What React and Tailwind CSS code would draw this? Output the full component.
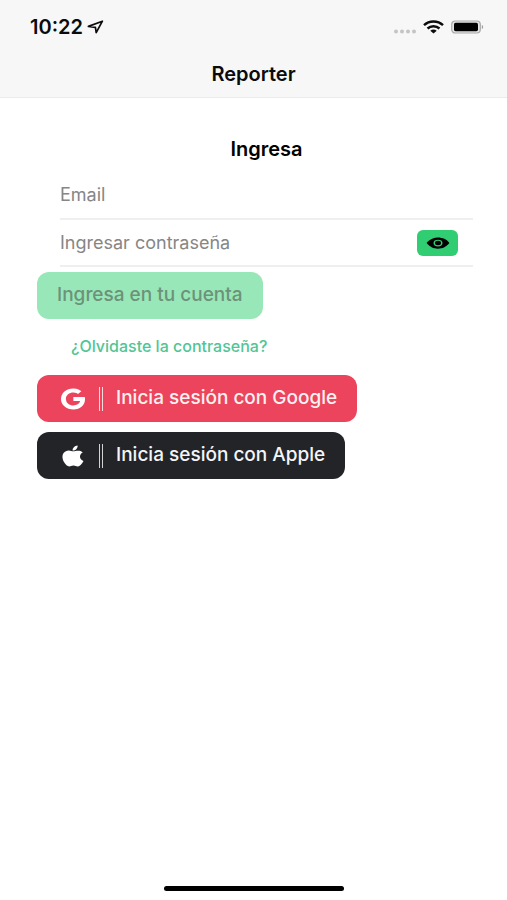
import { IoEye, IoLogoApple, IoLogoGoogle } from "react-icons/io5";

function StatusBar() {
  return (
    <div className="flex h-[54px] items-center justify-between pr-[23px] pl-[30px]">
      <div className="flex items-center gap-1">
        <span className="text-[20px] leading-7 font-semibold">10:22</span>
        <svg className="h-[14px] w-[17px]" viewBox="0 0 17 14" fill="none" aria-hidden="true">
          <path d="M15.400 1.200 1.400 6.400l7 .9.8 5.400z" stroke="currentColor" strokeWidth="1.700" strokeLinejoin="round" />
        </svg>
      </div>
      <div className="flex items-center gap-[6px]">
        <svg className="h-[14px] w-[24px]" viewBox="0 0 24 14" fill="#c4c4c4" aria-hidden="true">
          <circle cx="3" cy="11.5" r="2" />
          <circle cx="9" cy="11.5" r="2" />
          <circle cx="15" cy="11.5" r="2" />
          <circle cx="21" cy="11.5" r="2" />
        </svg>
        <svg className="h-[14px] w-[21px]" viewBox="0 0 21 14" fill="none" stroke="currentColor" strokeWidth="2.4" aria-hidden="true">
          <path d="M1 5.200C6.200 .2 14.800 .2 20 5.200" />
          <path d="M4.500 8.500c3.400-3.100 8.600-3.100 12 0" />
          <path d="M7.300 10.700c1.900-1.500 4.500-1.500 6.400 0L10.500 13.400z" fill="currentColor" stroke="none" />
        </svg>
        <svg className="h-[14px] w-[34px]" viewBox="0 0 34 14" aria-hidden="true">
          <rect x="1.700" y="1" width="28.600" height="12" rx="3.500" fill="#e4e4e4" stroke="#a9a9a9" strokeWidth="1.200" />
          <rect x="4" y="2.800" width="24" height="8.400" rx="1.600" fill="#000" />
          <path d="M31.800 5c1.800.5 1.800 3.500 0 4z" fill="#a0a0a0" />
        </svg>
      </div>
    </div>
  );
}

function Divider() {
  return (
    <span className="flex h-6 w-1 justify-between" aria-hidden="true">
      <span className="w-px bg-white/80" />
      <span className="w-px bg-white/80" />
    </span>
  );
}

export default function App() {
  return (
    <div className="flex min-h-screen flex-col bg-white font-['Inter',sans-serif] text-[#0b0b0b]">
      <header className="border-b border-[#ebebeb] bg-[#f7f7f7]">
        <StatusBar />
        <h1 className="h-[43px] pt-[6px] text-center text-[20px] leading-7 font-semibold">Reporter</h1>
      </header>
      <main className="flex grow flex-col items-start pr-[34px] pl-[37px]">
        <form className="flex w-full flex-col items-start">
          <div className="w-full pl-[23px]">
            <h2 className="mt-[37px] mb-2 text-center text-[20px] leading-7 font-semibold text-black">Ingresa</h2>
            <div className="flex h-[49px] items-center border-b-2 border-[#efefef]">
              <input
                type="email"
                aria-label="Email"
                placeholder="Email"
                className="w-full min-w-0 bg-transparent text-[18px] leading-6 outline-none placeholder:text-[#868686]"
              />
            </div>
            <div className="flex h-[47px] items-center border-b-2 border-[#efefef] pr-[15px]">
              <input
                type="password"
                aria-label="Ingresar contraseña"
                placeholder="Ingresar contraseña"
                className="w-full min-w-0 bg-transparent text-[18px] leading-6 outline-none placeholder:text-[#868686]"
              />
              <button
                type="button"
                aria-label="Mostrar contraseña"
                className="flex h-[26px] w-[41px] shrink-0 items-center justify-center rounded-md bg-[#31cd72] text-black"
              >
                <IoEye preserveAspectRatio="none" className="h-[18px] w-6" />
              </button>
            </div>
          </div>
          <button
            type="submit"
            className="mt-[5px] h-[47px] rounded-xl bg-[#98e7b8] px-[20px] text-[19px] font-medium text-[#6c9279]"
          >
            Ingresa en tu cuenta
          </button>
        </form>
        <a href="#recuperar" className="mt-[17px] ml-[34px] text-[16px] leading-5 font-medium text-[#52c596]">
          ¿Olvidaste la contraseña?
        </a>
        <button
          type="button"
          className="mt-[19px] flex h-[47px] items-center rounded-xl bg-[#eb445c] pr-[20px] pl-[22px] text-[19px] font-medium text-[#fdf0f2]"
        >
          <IoLogoGoogle preserveAspectRatio="none" className="mr-3 h-6 w-7 text-white" />
          <Divider />
          <span className="ml-[13px]">Inicia sesión con Google</span>
        </button>
        <button
          type="button"
          className="mt-[10px] flex h-[47px] items-center rounded-xl bg-[#222428] pr-[20px] pl-[22px] text-[19px] font-medium text-[#f4f5f8]"
        >
          <IoLogoApple preserveAspectRatio="none" className="mr-3 h-6 w-7 text-white" />
          <Divider />
          <span className="ml-[13px]">Inicia sesión con Apple</span>
        </button>
      </main>
      <div className="mx-auto mb-[9px] h-[5px] w-[180px] rounded-full bg-black" />
    </div>
  );
}
